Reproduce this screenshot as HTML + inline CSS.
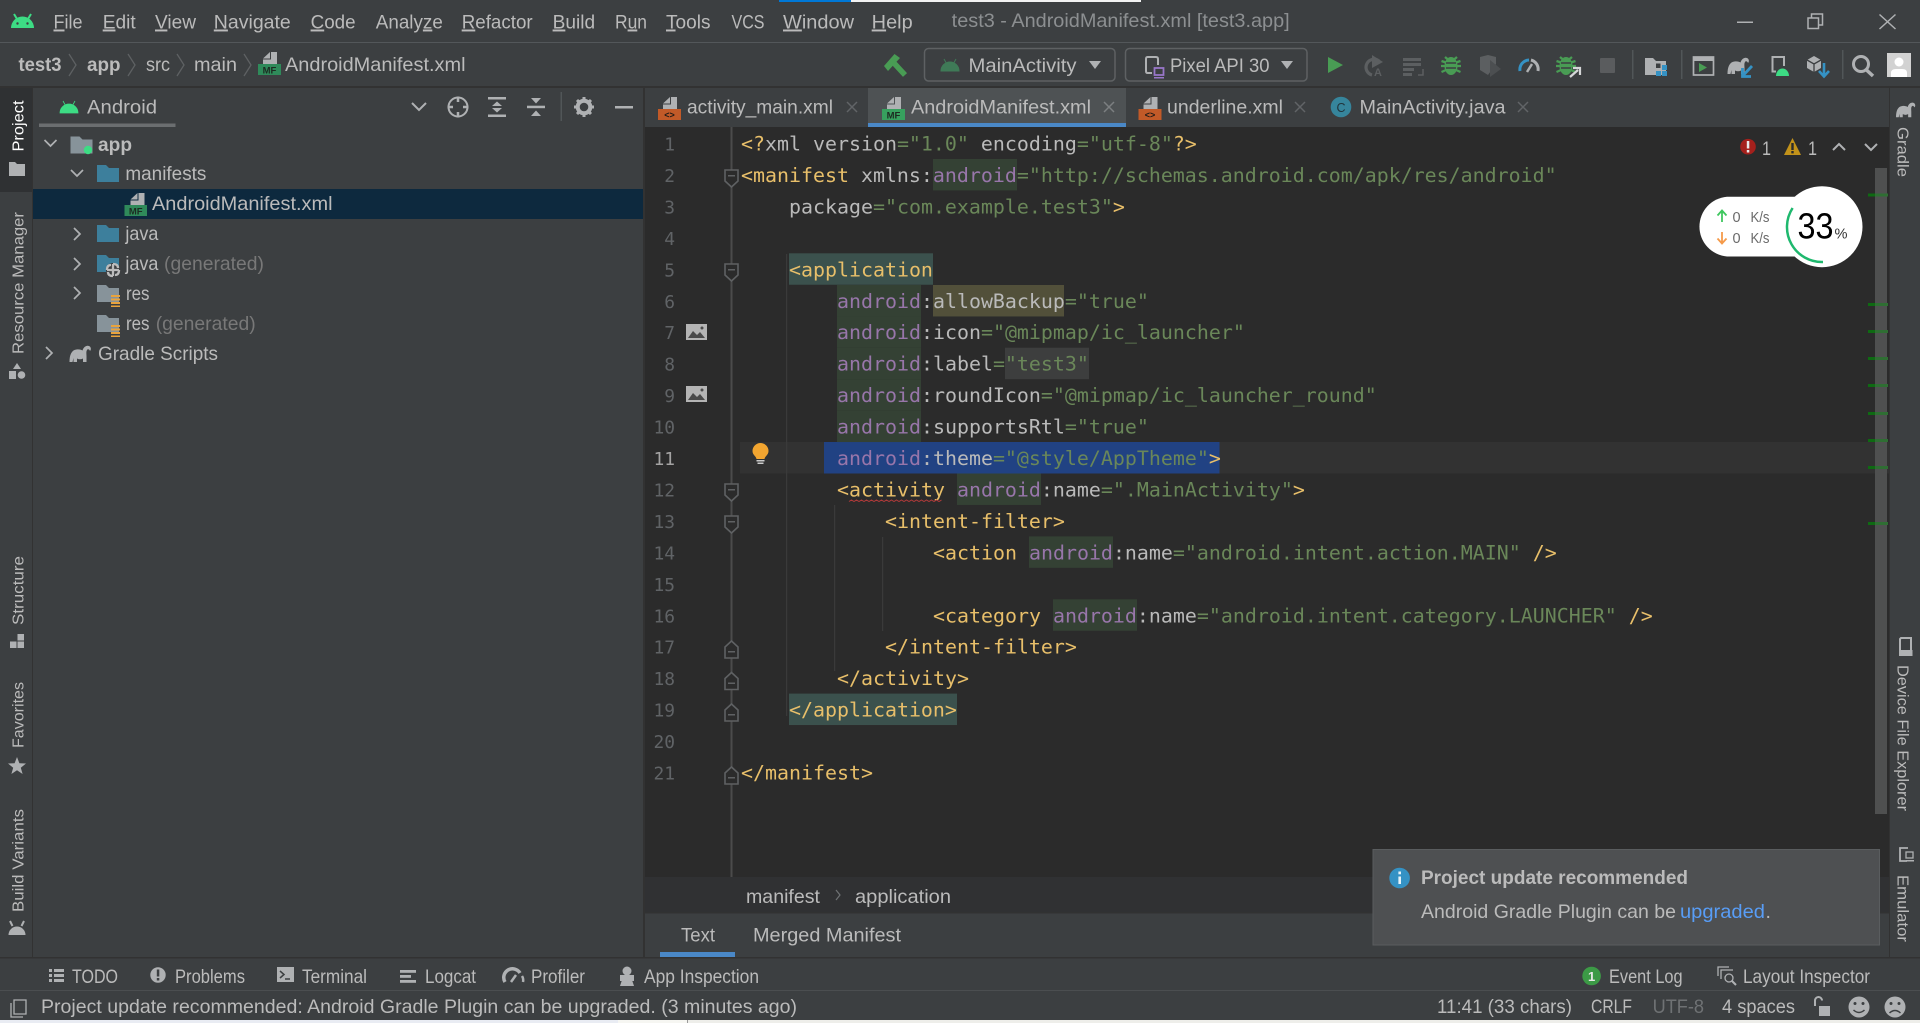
<!DOCTYPE html>
<html><head><meta charset="utf-8"><title>test3 - AndroidManifest.xml</title>
<style>
html,body{margin:0;padding:0;background:#3c3f41;overflow:hidden}
svg{display:block}
text{white-space:pre}
.u{font:19.5px "Liberation Sans",sans-serif;fill:#bbb}
.b{font:bold 19.5px "Liberation Sans",sans-serif;fill:#bbb}
.v{font:16px "Liberation Sans",sans-serif;fill:#bbb}
.c{font:19.93px "DejaVu Sans Mono","Liberation Mono",monospace;fill:#bababa}
.l{font:17.9px "DejaVu Sans Mono","Liberation Mono",monospace;fill:#606366;text-anchor:end}
.t{fill:#e8bf6a}.n{fill:#9876aa}.s{fill:#6a8759}
.g{fill:#787878}
.ic{fill:#afb1b3}
.d{fill:#5c5f61}
.gr{fill:#499c54}
</style></head><body>
<svg xmlns="http://www.w3.org/2000/svg" width="1920" height="1023" viewBox="0 0 1920 1023">
<defs>
<path id="eleph" d="M0 17C0 10 2 5 7 4.500C10 4 12 5 13 5.500C14 2 17 0 19.500 1C21.500 1.800 22 4.500 20.500 6C20 4.500 18.500 3.500 17.500 5C16.500 6.500 17 9 17 11V17H13.500V13.500C11.500 14.500 9.500 14.500 7.500 13.500V17H4V13L3 17Z"/>
<path id="droid" d="M0 13A9 9 0 0 1 18 13ZM3 1L5.500 5.500M15 1L12.500 5.500"/>
<path id="fold" d="M0 2H9L12 5H22V19H0Z"/>
<g id="doc"><path d="M12 0H18V12H4V7.500H12Z"/><path d="M4 6.500L11 0V6.500Z"/></g>
<g id="bug"><ellipse cx="0" cy="1" rx="6.500" ry="9" fill="#499c54"/><path d="M-6 -8L-3 -5.500M6 -8L3 -5.500M-10 1H-5M5 1H10M-9.500 -4L-5 -2.500M9.500 -4L5 -2.500M-9.500 7L-5 5M9.500 7L5 5" stroke="#499c54" stroke-width="2.300" fill="none"/><path d="M-5 -2H5M-5 3H5" stroke="#3c3f41" stroke-width="1.500"/></g>
</defs>

<!-- base -->
<rect width="1920" height="1023" fill="#3c3f41"/>
<rect x="779" y="0" width="72" height="2" fill="#0078d7"/><rect x="851" y="0" width="290" height="2" fill="#f2f2f2"/>
<rect y="42" width="1920" height="1" fill="#53575a"/>
<rect y="86" width="1920" height="2" fill="#323232"/>

<!-- title / menu -->
<g fill="#3ddc84"><path d="M11 28A11.500 11.500 0 0 1 34 28Z"/><path d="M14 14L17 19M31 14L28 19" stroke="#3ddc84" stroke-width="2"/></g>
<circle cx="17.500" cy="23.500" r="1.200" fill="#3c3f41"/><circle cx="27.500" cy="23.500" r="1.200" fill="#3c3f41"/>
<text class="u" x="53.500" y="28.500" textLength="29" lengthAdjust="spacingAndGlyphs"><tspan text-decoration="underline">F</tspan>ile</text>
<text class="u" x="102.700" y="28.500" textLength="33" lengthAdjust="spacingAndGlyphs"><tspan text-decoration="underline">E</tspan>dit</text>
<text class="u" x="155" y="28.500" textLength="41" lengthAdjust="spacingAndGlyphs"><tspan text-decoration="underline">V</tspan>iew</text>
<text class="u" x="213.800" y="28.500" textLength="77" lengthAdjust="spacingAndGlyphs"><tspan text-decoration="underline">N</tspan>avigate</text>
<text class="u" x="310.600" y="28.500" textLength="45" lengthAdjust="spacingAndGlyphs"><tspan text-decoration="underline">C</tspan>ode</text>
<text class="u" x="375.800" y="28.500" textLength="67" lengthAdjust="spacingAndGlyphs">Analy<tspan text-decoration="underline">z</tspan>e</text>
<text class="u" x="461.700" y="28.500" textLength="71" lengthAdjust="spacingAndGlyphs"><tspan text-decoration="underline">R</tspan>efactor</text>
<text class="u" x="552.600" y="28.500" textLength="42.500" lengthAdjust="spacingAndGlyphs"><tspan text-decoration="underline">B</tspan>uild</text>
<text class="u" x="615" y="28.500" textLength="32" lengthAdjust="spacingAndGlyphs">R<tspan text-decoration="underline">u</tspan>n</text>
<text class="u" x="666" y="28.500" textLength="44.500" lengthAdjust="spacingAndGlyphs"><tspan text-decoration="underline">T</tspan>ools</text>
<text class="u" x="731.500" y="28.500" textLength="33" lengthAdjust="spacingAndGlyphs">VCS</text>
<text class="u" x="783" y="28.500" textLength="71" lengthAdjust="spacingAndGlyphs"><tspan text-decoration="underline">W</tspan>indow</text>
<text class="u" x="871.700" y="28.500" textLength="41" lengthAdjust="spacingAndGlyphs"><tspan text-decoration="underline">H</tspan>elp</text>
<text class="u" style="fill:#8c8f91" x="951.700" y="27" textLength="338" lengthAdjust="spacingAndGlyphs">test3 - AndroidManifest.xml [test3.app]</text>
<rect x="1737" y="21.500" width="16" height="1.500" fill="#afb1b3"/>
<g fill="none" stroke="#afb1b3" stroke-width="1.500"><rect x="1808" y="18" width="10.500" height="10.500"/><path d="M1811.500 18V14H1822.500V25H1818.500"/><path d="M1879.500 14.500L1895.500 29M1895.500 14.500L1879.500 29"/></g>

<!-- nav bar -->
<text class="b" x="18.500" y="71" textLength="43" lengthAdjust="spacingAndGlyphs">test3</text>
<text class="b" x="87" y="71" textLength="33.500" lengthAdjust="spacingAndGlyphs">app</text>
<text class="u" x="146" y="71" textLength="24" lengthAdjust="spacingAndGlyphs">src</text>
<text class="u" x="194" y="71" textLength="43" lengthAdjust="spacingAndGlyphs">main</text>
<g fill="none" stroke="#5e6163" stroke-width="1.300"><path d="M69 54L76 65L69 76M128 54L135 65L128 76M177 54L184 65L177 76M244 54L251 65L244 76"/></g>
<g transform="translate(258,52)"><use href="#doc" class="ic" transform="translate(1,0)"/><rect y="12" width="23" height="11" fill="#2f8a5a"/><text x="11.500" y="21.500" text-anchor="middle" style="font:bold 9.500px 'Liberation Sans',sans-serif;fill:#1d2b22">MF</text></g>
<text class="u" x="285" y="71" textLength="180.500" lengthAdjust="spacingAndGlyphs">AndroidManifest.xml</text>

<!-- toolbar -->
<path d="M893 62L905 75" stroke="#499c54" stroke-width="5.500"/><path d="M884 66L894.500 54L900 58L888 71Z" fill="#499c54"/>
<rect x="924.500" y="48.500" width="190.500" height="32.500" rx="4" fill="none" stroke="#5e6163" stroke-width="1.500"/>
<rect x="1125.500" y="48.500" width="181.500" height="32.500" rx="4" fill="none" stroke="#5e6163" stroke-width="1.500"/>
<g transform="translate(941,58)"><use href="#droid" fill="#3f7a57" stroke="#3f7a57" stroke-width="1"/></g>
<text class="u" x="968.500" y="72" textLength="108" lengthAdjust="spacingAndGlyphs">MainActivity</text>
<path d="M1089 61H1101L1095 69Z" class="ic"/>
<g fill="none" stroke="#afb1b3" stroke-width="2"><path d="M1152 73H1147.500Q1146 73 1146 71V59Q1146 57 1147.500 57H1156Q1158 57 1158 59V65"/></g><rect x="1154.500" y="68" width="9" height="7" fill="none" stroke="#9876c8" stroke-width="1.800"/><rect x="1154" y="77" width="10" height="1.500" fill="#9876c8"/>
<text class="u" x="1170" y="72" textLength="99.500" lengthAdjust="spacingAndGlyphs">Pixel API 30</text>
<path d="M1281 61H1293L1287 69Z" class="ic"/>

<polygon points="1328,57 1343,65 1328,73" fill="#499c54"/>
<g fill="none" stroke="#5c5f61" stroke-width="3.200"><path d="M1379 61A8 8 0 1 0 1372 75"/></g><path d="M1372 55L1383 62L1372 68Z" class="d"/><text x="1374" y="76" style="font:bold 11px 'Liberation Sans',sans-serif;fill:#5c5f61">A</text>
<g class="d"><rect x="1403" y="58" width="18" height="3"/><rect x="1403" y="63" width="18" height="3"/><rect x="1403" y="68" width="11" height="3"/><rect x="1403" y="73" width="9" height="3"/></g><path d="M1418 75H1423V69" fill="none" stroke="#5c5f61" stroke-width="1.500"/>
<use href="#bug" transform="translate(1451,65)"/>
<path d="M1480 57L1488 55L1496 57V64L1488 75L1480 70Z" class="d"/><path d="M1490 60L1501 69L1490 77Z" fill="#4c4f51"/>
<path d="M1520 71A9.500 9.500 0 0 1 1529 60" fill="none" stroke="#3592c4" stroke-width="3"/><path d="M1531 60A9.500 9.500 0 0 1 1538 71" fill="none" stroke="#afb1b3" stroke-width="3"/><path d="M1527 72L1532 64" stroke="#afb1b3" stroke-width="2.500"/>
<use href="#bug" transform="translate(1566,65)"/><path d="M1570 77L1578 70M1573 68H1580V75" fill="none" stroke="#d5d7d8" stroke-width="2.200"/>
<rect x="1600" y="58" width="15" height="15" rx="1" fill="#5a5c5e"/>
<rect x="1632" y="50" width="1.500" height="29" fill="#515658"/>
<path d="M1645 58H1653L1656 61H1666V75H1645Z" class="ic"/><g fill="#3592c4"><rect x="1656" y="63.500" width="4.500" height="4.500" fill="#3c3f41"/><rect x="1662" y="65" width="5" height="5"/><rect x="1656" y="71" width="5" height="5"/><rect x="1662" y="71" width="5" height="5"/></g>
<rect x="1681" y="50" width="1.500" height="29" fill="#515658"/>
<rect x="1693.500" y="57" width="20" height="18" fill="none" stroke="#afb1b3" stroke-width="1.700"/><rect x="1693" y="57" width="21" height="4" fill="#afb1b3"/><polygon points="1699,63 1707,67.500 1699,72" fill="#499c54"/>
<use href="#eleph" class="ic" transform="translate(1727.500,57) scale(1,1)"/><path d="M1752 66L1743.500 75M1751 76.500H1742.500V68" fill="none" stroke="#3592c4" stroke-width="2.800"/>
<path d="M1776 71.500H1772.500V57H1784V66" fill="none" stroke="#afb1b3" stroke-width="2"/><path d="M1776 76A6.500 7.500 0 0 1 1789 76Z" fill="#3ddc84"/>
<path d="M1807 60L1814 56L1821 60V68L1814 72L1807 68Z" class="ic"/><path d="M1814 63V72M1807 60L1814 64L1821 60" stroke="#3c3f41" stroke-width="1.300" fill="none"/><path d="M1824 63V76M1819 71L1824 76.500L1829 71" stroke="#3592c4" stroke-width="2.600" fill="none"/>
<rect x="1842" y="50" width="1.500" height="29" fill="#515658"/>
<circle cx="1861" cy="64" r="7.500" fill="none" stroke="#afb1b3" stroke-width="3"/><path d="M1866.500 70L1873 76" stroke="#afb1b3" stroke-width="3.500"/>
<rect x="1887" y="53" width="24" height="24" fill="#d2d2d2"/><circle cx="1899" cy="62" r="4.500" fill="#fff"/><path d="M1891 77V73Q1891 69 1896 69H1902Q1907 69 1907 73V77Z" fill="#fff"/>

<!-- left stripe -->
<rect x="0" y="88" width="32" height="104" fill="#2f3133"/>
<rect x="32" y="88" width="1" height="870" fill="#323232"/>
<text class="v" style="fill:#fff" transform="translate(23.500,151.500) rotate(-90)" textLength="51" lengthAdjust="spacingAndGlyphs">Project</text>
<path d="M9 162H15L17 164H25V176H9Z" class="ic"/>
<text class="v" transform="translate(23.500,354) rotate(-90)" textLength="142" lengthAdjust="spacingAndGlyphs">Resource Manager</text>
<path d="M17 363L21 369H13Z M9 371H16V379H9Z" class="ic"/><circle cx="21.500" cy="375" r="3.800" class="ic"/>
<text class="v" transform="translate(23.500,625) rotate(-90)" textLength="69" lengthAdjust="spacingAndGlyphs">Structure</text>
<g class="ic"><rect x="17.500" y="634" width="6.500" height="6.500"/><rect x="10" y="641.500" width="6.500" height="6.500"/><rect x="17.500" y="641.500" width="6.500" height="6.500"/></g>
<text class="v" transform="translate(23.500,748) rotate(-90)" textLength="66" lengthAdjust="spacingAndGlyphs">Favorites</text>
<path d="M17 757L19.400 763.300L26 763.500L20.800 767.700L22.600 774L17 770.300L11.400 774L13.200 767.700L8 763.500L14.600 763.300Z" class="ic"/>
<text class="v" transform="translate(23.500,912) rotate(-90)" textLength="103" lengthAdjust="spacingAndGlyphs">Build Variants</text>
<path d="M8.500 935A8.500 8.500 0 0 1 25.500 935Z" class="ic"/><path d="M10 921L12.500 926M24 921L21.500 926" stroke="#afb1b3" stroke-width="2"/>

<!-- project panel -->
<rect x="643" y="88" width="2" height="870" fill="#323232"/>
<g transform="translate(60,100)"><use href="#droid" fill="#3ddc84" stroke="#3ddc84" stroke-width=".8"/></g>
<text class="u" x="87" y="113.500" textLength="70" lengthAdjust="spacingAndGlyphs">Android</text>
<rect x="39" y="123.500" width="136.500" height="3.500" fill="#6b6e70"/>
<path d="M412 103L419 110L426 103" fill="none" stroke="#afb1b3" stroke-width="2"/>
<circle cx="458" cy="107" r="9.500" fill="none" stroke="#afb1b3" stroke-width="2"/><path d="M458 96.500V102M458 112V117.500M447.500 107H453M463 107H468.500" stroke="#afb1b3" stroke-width="2.500"/>
<g class="ic"><rect x="488" y="97" width="18" height="2.500"/><rect x="488" y="114.500" width="18" height="2.500"/><path d="M497 101.500L502 106H492Z M497 112.500L492 108H502Z"/></g>
<g class="ic"><rect x="527" y="105.700" width="18" height="2.500"/><path d="M531 98H541L536 103.500Z M531 116H541L536 110.500Z"/></g>
<rect x="560.500" y="92" width="1.500" height="29" fill="#515658"/>
<g><circle cx="584" cy="107" r="6.300" fill="none" stroke="#afb1b3" stroke-width="4"/><path d="M584 97V117M574 107H594M577 100L591 114M591 100L577 114" stroke="#afb1b3" stroke-width="3" stroke-dasharray="3.500 13"/></g>
<rect x="615" y="106" width="18" height="2.500" fill="#afb1b3"/>

<!-- tree -->
<rect x="33" y="189" width="610" height="30" fill="#0d293e"/>
<g fill="none" stroke="#afb1b3" stroke-width="1.700"><path d="M44.500 140L50.500 146L56.500 140M71 170L77 176L83 170M74 228L80 234L74 240M74 258L80 264L74 270M74 287L80 293L74 299M46 347L52 353L46 359"/></g>
<use href="#fold" fill="#87939a" transform="translate(70.500,134.500)"/><circle cx="88" cy="150" r="4.200" fill="#3ddc84"/>
<text class="b" x="98" y="151" textLength="34" lengthAdjust="spacingAndGlyphs">app</text>
<use href="#fold" fill="#3d7f9c" transform="translate(97,163)"/>
<text class="u" x="125.400" y="180" textLength="81" lengthAdjust="spacingAndGlyphs">manifests</text>
<g transform="translate(124.500,193)"><use href="#doc" class="ic" transform="translate(2,0)"/><rect y="12" width="22.500" height="11" fill="#2f8a5a"/><text x="11.200" y="21.500" text-anchor="middle" style="font:bold 9.500px 'Liberation Sans',sans-serif;fill:#1d2b22">MF</text></g>
<text class="u" x="152" y="210" textLength="180.500" lengthAdjust="spacingAndGlyphs">AndroidManifest.xml</text>
<use href="#fold" fill="#3d7f9c" transform="translate(97,223)"/>
<text class="u" x="125.400" y="240" textLength="33" lengthAdjust="spacingAndGlyphs">java</text>
<use href="#fold" fill="#3d7f9c" transform="translate(97,253)"/>
<circle cx="113" cy="270" r="7" fill="#3c3f41"/><g stroke="#bbb" stroke-width="2.300" fill="none"><path d="M113 264Q118 264 118 268M119 270Q119 275 115 275M113 276Q108 276 108 272M107 270Q107 265 111 265M113 270L113 264M113 270L119 270M113 270L113 276M113 270L107 270"/></g>
<text class="u" x="125.400" y="270" textLength="33" lengthAdjust="spacingAndGlyphs">java</text><text class="u g" x="164" y="270" textLength="100" lengthAdjust="spacingAndGlyphs">(generated)</text>
<use href="#fold" fill="#87939a" transform="translate(97,283)"/>
<g fill="#e8a33d"><rect x="111" y="295" width="9" height="2"/><rect x="111" y="298.500" width="9" height="2"/><rect x="111" y="302" width="9" height="2"/><rect x="111" y="305.500" width="9" height="1.500"/></g>
<text class="u" x="126" y="300" textLength="23.500" lengthAdjust="spacingAndGlyphs">res</text>
<use href="#fold" fill="#87939a" transform="translate(97,313)"/>
<g fill="#e8a33d"><rect x="111" y="325" width="9" height="2"/><rect x="111" y="328.500" width="9" height="2"/><rect x="111" y="332" width="9" height="2"/><rect x="111" y="335.500" width="9" height="1.500"/></g>
<text class="u" x="126" y="330" textLength="23.500" lengthAdjust="spacingAndGlyphs">res</text><text class="u g" x="155.700" y="330" textLength="100" lengthAdjust="spacingAndGlyphs">(generated)</text>
<use href="#eleph" class="ic" transform="translate(69.500,345)"/>
<text class="u" x="98" y="360" textLength="120" lengthAdjust="spacingAndGlyphs">Gradle Scripts</text>

<!-- tab bar -->
<rect x="868" y="88" width="258" height="39" fill="#4e5254"/>
<rect x="868" y="123" width="258" height="4" fill="#4a88c7"/>
<g transform="translate(658,97)"><use href="#doc" class="ic" transform="translate(1,0)"/><rect y="12" width="23" height="11" fill="#c25a28"/><text x="11.500" y="21" text-anchor="middle" style="font:bold 9px 'Liberation Sans',sans-serif;fill:#1f1a17">&lt;&gt;</text></g>
<text class="u" x="687" y="113.500" textLength="146" lengthAdjust="spacingAndGlyphs">activity_main.xml</text>
<g transform="translate(882,97)"><use href="#doc" class="ic" transform="translate(1,0)"/><rect y="12" width="23" height="11" fill="#37a05e"/><text x="11.500" y="21.500" text-anchor="middle" style="font:bold 9.500px 'Liberation Sans',sans-serif;fill:#1d2b22">MF</text></g>
<text class="u" x="911" y="113.500" textLength="180" lengthAdjust="spacingAndGlyphs">AndroidManifest.xml</text>
<g transform="translate(1138.500,97)"><use href="#doc" class="ic" transform="translate(1,0)"/><rect y="12" width="23" height="11" fill="#c25a28"/><text x="11.500" y="21" text-anchor="middle" style="font:bold 9px 'Liberation Sans',sans-serif;fill:#1f1a17">&lt;&gt;</text></g>
<text class="u" x="1167" y="113.500" textLength="116" lengthAdjust="spacingAndGlyphs">underline.xml</text>
<circle cx="1341" cy="107" r="10.300" fill="#3592ad" opacity=".85"/><text x="1341" y="112" text-anchor="middle" style="font:12.500px 'Liberation Sans',sans-serif;fill:#21353d">C</text>
<text class="u" x="1359.500" y="113.500" textLength="146" lengthAdjust="spacingAndGlyphs">MainActivity.java</text>
<g fill="none" stroke="#616467" stroke-width="1.500"><path d="M847 102L857 112M857 102L847 112M1295 102L1305 112M1305 102L1295 112M1518 102L1528 112M1528 102L1518 112"/><path d="M1104 102L1114 112M1114 102L1104 112" stroke="#7c7f81"/></g>

<!-- editor -->
<rect x="645" y="127" width="1244" height="750" fill="#2b2b2b"/>
<rect x="645" y="877" width="1244" height="36" fill="#303133"/>
<rect x="740" y="442" width="1149" height="31.500" fill="#323232"/>
<rect x="824" y="442" width="395.500" height="31.500" fill="#214283"/>

<!-- indent guides & fold line -->
<rect x="730.500" y="127" width="2" height="750" fill="#4b4b4b"/>
<g fill="#3a3a3a"><rect x="786" y="254" width="1.200" height="462"/><rect x="834" y="505" width="1.200" height="166"/><rect x="882" y="537" width="1.200" height="94"/></g>

<!-- highlights -->
<g fill="#344134">
<rect x="933" y="159" width="84" height="31.450"/>
<rect x="837" y="285" width="84" height="31.450"/>
<rect x="837" y="316.300" width="84" height="31.450"/>
<rect x="837" y="347.700" width="84" height="31.450"/>
<rect x="837" y="379.100" width="84" height="31.450"/>
<rect x="837" y="410.600" width="84" height="31.450"/>
<rect x="957" y="473.500" width="84" height="31.450"/>
<rect x="1029" y="536.400" width="84" height="31.450"/>
<rect x="1053" y="599.300" width="84" height="31.450"/>
</g>
<g fill="#3b514d"><rect x="789" y="253.300" width="144" height="31.450"/><rect x="789" y="693.600" width="168" height="31.450"/></g>
<rect x="933" y="285" width="131" height="31.450" fill="#52503a"/>
<rect x="1005" y="347.700" width="84" height="31.450" fill="#3d3e3e"/>

<!-- line numbers -->
<g transform="translate(0,1)">
<text class="l" x="675" y="149.500">1</text><text class="l" x="675" y="181">2</text><text class="l" x="675" y="212.400">3</text><text class="l" x="675" y="243.900">4</text><text class="l" x="675" y="275.300">5</text><text class="l" x="675" y="306.800">6</text><text class="l" x="675" y="338.200">7</text><text class="l" x="675" y="369.700">8</text><text class="l" x="675" y="401.100">9</text><text class="l" x="675" y="432.600">10</text><text class="l" style="fill:#a4a3a3" x="675" y="464">11</text><text class="l" x="675" y="495.500">12</text><text class="l" x="675" y="526.900">13</text><text class="l" x="675" y="558.400">14</text><text class="l" x="675" y="589.800">15</text><text class="l" x="675" y="621.300">16</text><text class="l" x="675" y="652.700">17</text><text class="l" x="675" y="684.200">18</text><text class="l" x="675" y="715.600">19</text><text class="l" x="675" y="747.100">20</text><text class="l" x="675" y="778.500">21</text>
</g>

<!-- fold markers -->
<g fill="#2b2b2b" stroke="#5f6163" stroke-width="1.600">
<path d="M725 170H738V181L731.500 187L725 181Z"/><path d="M725 264H738V275L731.500 281L725 275Z"/><path d="M725 484H738V495L731.500 501L725 495Z"/><path d="M725 516H738V527L731.500 533L725 527Z"/>
<path d="M725 658H738V647L731.500 641L725 647Z"/><path d="M725 689.500H738V678.500L731.500 672.500L725 678.500Z"/><path d="M725 721H738V710L731.500 704L725 710Z"/><path d="M725 784H738V773L731.500 767L725 773Z"/>
</g>
<g fill="#5f6163"><rect x="728" y="175" width="7" height="1.500"/><rect x="728" y="269" width="7" height="1.500"/><rect x="728" y="489" width="7" height="1.500"/><rect x="728" y="521" width="7" height="1.500"/><rect x="728" y="651" width="7" height="1.500"/><rect x="728" y="682.500" width="7" height="1.500"/><rect x="728" y="714" width="7" height="1.500"/><rect x="728" y="777" width="7" height="1.500"/></g>

<!-- gutter icons -->
<g><rect x="686" y="324" width="21" height="16" fill="#b4b4b4"/><path d="M688 338L693 331L697 335L700 332L705 338Z" fill="#4a4a4a"/><circle cx="702" cy="328" r="1.500" fill="#4a4a4a"/></g>
<g><rect x="686" y="386" width="21" height="16" fill="#b4b4b4"/><path d="M688 400L693 393L697 397L700 394L705 400Z" fill="#4a4a4a"/><circle cx="702" cy="390" r="1.500" fill="#4a4a4a"/></g>
<path d="M760.500 443A8 8 0 0 1 768.500 451C768.500 455 765 456 764.500 459H756.500C756 456 752.500 455 752.500 451A8 8 0 0 1 760.500 443Z" fill="#f2a530"/><rect x="756.500" y="460" width="8" height="1.500" fill="#ccc"/><rect x="757.500" y="462.500" width="6" height="1.500" fill="#ccc"/>

<!-- code -->
<g transform="translate(0,1)">
<text class="c" x="741" y="149.500"><tspan class="t">&lt;?</tspan>xml version<tspan class="s">="1.0"</tspan> encoding<tspan class="s">="utf-8"</tspan><tspan class="t">?&gt;</tspan></text>
<text class="c" x="741" y="181"><tspan class="t">&lt;manifest</tspan> xmlns:<tspan class="n">android</tspan><tspan class="s">="http://schemas.android.com/apk/res/android"</tspan></text>
<text class="c" x="789" y="212.400">package<tspan class="s">="com.example.test3"</tspan><tspan class="t">&gt;</tspan></text>
<text class="c t" x="789" y="275.300">&lt;application</text>
<text class="c" x="837" y="306.800"><tspan class="n">android</tspan>:allowBackup<tspan class="s">="true"</tspan></text>
<text class="c" x="837" y="338.200"><tspan class="n">android</tspan>:icon<tspan class="s">="@mipmap/ic_launcher"</tspan></text>
<text class="c" x="837" y="369.700"><tspan class="n">android</tspan>:label<tspan class="s">="test3"</tspan></text>
<text class="c" x="837" y="401.100"><tspan class="n">android</tspan>:roundIcon<tspan class="s">="@mipmap/ic_launcher_round"</tspan></text>
<text class="c" x="837" y="432.600"><tspan class="n">android</tspan>:supportsRtl<tspan class="s">="true"</tspan></text>
<text class="c" x="837" y="464"><tspan class="n">android</tspan>:theme<tspan class="s">="@style/AppTheme"</tspan><tspan class="t">&gt;</tspan></text>
<text class="c" x="837" y="495.500"><tspan class="t">&lt;activity</tspan> <tspan class="n">android</tspan>:name<tspan class="s">=".MainActivity"</tspan><tspan class="t">&gt;</tspan></text>
<text class="c t" x="885" y="526.900">&lt;intent-filter&gt;</text>
<text class="c" x="933" y="558.400"><tspan class="t">&lt;action</tspan> <tspan class="n">android</tspan>:name<tspan class="s">="android.intent.action.MAIN"</tspan> <tspan class="t">/&gt;</tspan></text>
<text class="c" x="933" y="621.300"><tspan class="t">&lt;category</tspan> <tspan class="n">android</tspan>:name<tspan class="s">="android.intent.category.LAUNCHER"</tspan> <tspan class="t">/&gt;</tspan></text>
<text class="c t" x="885" y="652.700">&lt;/intent-filter&gt;</text>
<text class="c t" x="837" y="684.200">&lt;/activity&gt;</text>
<text class="c t" x="789" y="715.600">&lt;/application&gt;</text>
<text class="c t" x="741" y="778.500">&lt;/manifest&gt;</text>
</g>
<path d="M849 501.500l2.500 -1.500 2.500 1.500 2.500 -1.500 2.500 1.500 2.500 -1.500 2.500 1.500 2.500 -1.500 2.500 1.500 2.500 -1.500 2.500 1.500 2.500 -1.500 2.500 1.500 2.500 -1.500 2.500 1.500 2.500 -1.500 2.500 1.500 2.500 -1.500 2.500 1.500 2.500 -1.500 2.500 1.500 2.500 -1.500 2.500 1.500 2.500 -1.500 2.500 1.500 2.500 -1.500 2.500 1.500 2.500 -1.500 2.500 1.500 2.500 -1.500 2.500 1.500 2.500 -1.500 2.500 1.500 2.500 -1.500 2.500 1.500 2.500 -1.500 2.500 1.500 2.500 -1.500" fill="none" stroke="#b03a3a" stroke-width="1"/>

<!-- scrollbar & marks -->
<rect x="1875" y="168" width="12" height="646" fill="#4f5050"/>
<g><rect x="1868" y="193.500" width="7" height="3" fill="#0e6a12"/><rect x="1875" y="193.500" width="13" height="3" fill="#2f6e33"/>
<rect x="1868" y="303" width="7" height="3" fill="#0e6a12"/><rect x="1875" y="303" width="13" height="3" fill="#2f6e33"/>
<rect x="1868" y="330" width="7" height="3" fill="#0e6a12"/><rect x="1875" y="330" width="13" height="3" fill="#2f6e33"/>
<rect x="1868" y="357" width="7" height="3" fill="#0e6a12"/><rect x="1875" y="357" width="13" height="3" fill="#2f6e33"/>
<rect x="1868" y="384" width="7" height="3" fill="#0e6a12"/><rect x="1875" y="384" width="13" height="3" fill="#2f6e33"/>
<rect x="1868" y="412" width="7" height="3" fill="#0e6a12"/><rect x="1875" y="412" width="13" height="3" fill="#2f6e33"/>
<rect x="1868" y="439" width="7" height="3" fill="#0e6a12"/><rect x="1875" y="439" width="13" height="3" fill="#2f6e33"/>
<rect x="1868" y="466" width="7" height="3" fill="#0e6a12"/><rect x="1875" y="466" width="13" height="3" fill="#2f6e33"/>
<rect x="1868" y="522" width="7" height="3" fill="#0e6a12"/><rect x="1875" y="522" width="13" height="3" fill="#2f6e33"/></g>

<!-- inspections -->
<circle cx="1748" cy="146.700" r="7.800" fill="#a4201c"/><rect x="1746.800" y="141" width="2.500" height="7.500" fill="#e8e8e8"/><rect x="1746.800" y="150" width="2.500" height="2.500" fill="#e8e8e8"/>
<text x="1762" y="155" textLength="9" lengthAdjust="spacingAndGlyphs" style="font:19px 'Liberation Sans',sans-serif;fill:#bbb">1</text>
<path d="M1792.500 138L1801 155H1784Z" fill="#c2921a"/><rect x="1791.300" y="143" width="2.400" height="7" fill="#2b2b2b"/><rect x="1791.300" y="151" width="2.400" height="2.400" fill="#2b2b2b"/>
<text x="1808" y="155" textLength="9" lengthAdjust="spacingAndGlyphs" style="font:19px 'Liberation Sans',sans-serif;fill:#bbb">1</text>
<path d="M1833 150L1839 144L1845 150M1865 144L1871 150L1877 144" fill="none" stroke="#afb1b3" stroke-width="2"/>

<!-- net widget -->
<path d="M1727 196.700H1800V256.500H1727A30 30 0 0 1 1727 196.700Z" fill="#fff"/>
<circle cx="1822" cy="226.700" r="40.500" fill="#fff"/>
<path d="M1792.600 208A35 35 0 0 0 1823 262" fill="none" stroke="#1fb86e" stroke-width="2.500"/>
<path d="M1722 222V211M1717.500 215.500L1722 210.500L1726.500 215.500" fill="none" stroke="#3fc75f" stroke-width="1.800"/>
<path d="M1722 232V243M1717.500 238.500L1722 243.500L1726.500 238.500" fill="none" stroke="#f59a4a" stroke-width="1.800"/>
<g style="font:14.500px 'Liberation Sans',sans-serif;fill:#6a6a6a"><text x="1732.500" y="222">0</text><text x="1750.500" y="222" textLength="19" lengthAdjust="spacingAndGlyphs">K/s</text><text x="1732.500" y="243">0</text><text x="1750.500" y="243" textLength="19" lengthAdjust="spacingAndGlyphs">K/s</text></g>
<text x="1797.500" y="238.500" textLength="36" lengthAdjust="spacingAndGlyphs" style="font:36px 'Liberation Sans',sans-serif;fill:#000">33</text>
<text x="1834.500" y="238.500" textLength="13" lengthAdjust="spacingAndGlyphs" style="font:15px 'Liberation Sans',sans-serif;fill:#333">%</text>

<!-- editor bottom -->
<text class="u" x="746" y="903" textLength="74" lengthAdjust="spacingAndGlyphs">manifest</text>
<path d="M836 890L840 895L836 900" fill="none" stroke="#6f7274" stroke-width="1.200"/>
<text class="u" x="855" y="903" textLength="96" lengthAdjust="spacingAndGlyphs">application</text>
<rect x="645" y="913" width="1244" height="44" fill="#3c3f41"/>
<rect x="645" y="912.500" width="1244" height="1" fill="#323232"/>
<text class="u" x="681" y="941.500" textLength="34" lengthAdjust="spacingAndGlyphs">Text</text>
<rect x="660" y="952" width="75" height="5" fill="#4a88c7"/>
<text class="u" x="753" y="941.500" textLength="148" lengthAdjust="spacingAndGlyphs">Merged Manifest</text>

<!-- notification -->
<rect x="1373" y="849.500" width="506.500" height="95.500" fill="#4e5052" stroke="#5a5d5f" stroke-width="1"/>
<circle cx="1399.600" cy="878" r="10.300" fill="#3592c4"/><rect x="1398.400" y="876.500" width="2.600" height="7.500" fill="#e6f2f9"/><rect x="1398.400" y="871.500" width="2.600" height="2.800" fill="#e6f2f9"/>
<text class="b" x="1421" y="884" textLength="267" lengthAdjust="spacingAndGlyphs">Project update recommended</text>
<text class="u" x="1421" y="918" textLength="255" lengthAdjust="spacingAndGlyphs">Android Gradle Plugin can be</text>
<text class="u" style="fill:#589df6" x="1680" y="918" textLength="85" lengthAdjust="spacingAndGlyphs">upgraded</text>
<text class="u" x="1765.500" y="918">.</text>

<!-- right stripe -->
<rect x="1889" y="88" width="1" height="870" fill="#323232"/>
<use href="#eleph" class="ic" transform="translate(1896,102) scale(.9)"/>
<text class="v" transform="translate(1897.500,127) rotate(90)" textLength="50" lengthAdjust="spacingAndGlyphs">Gradle</text>
<path d="M1901 638H1911V655H1900V639Z" fill="none" stroke="#afb1b3" stroke-width="2"/><rect x="1899" y="650" width="13.500" height="6" fill="#afb1b3"/>
<text class="v" transform="translate(1897.500,665) rotate(90)" textLength="146" lengthAdjust="spacingAndGlyphs">Device File Explorer</text>
<path d="M1908 848H1900V861H1907" fill="none" stroke="#afb1b3" stroke-width="1.800"/><rect x="1906" y="852" width="7" height="6" fill="none" stroke="#afb1b3" stroke-width="1.300"/><rect x="1906" y="860" width="8" height="1.500" fill="#afb1b3"/>
<text class="v" transform="translate(1897.500,875) rotate(90)" textLength="67" lengthAdjust="spacingAndGlyphs">Emulator</text>

<!-- bottom tool bar -->
<rect y="957" width="1920" height="1.500" fill="#323232"/>
<rect y="990" width="1920" height="1" fill="#4b4e50"/>
<g class="ic"><rect x="49" y="969" width="3" height="3"/><rect x="54" y="969" width="10" height="3"/><rect x="49" y="974" width="3" height="3"/><rect x="54" y="974" width="10" height="3"/><rect x="49" y="979" width="3" height="3"/><rect x="54" y="979" width="10" height="3"/></g>
<text class="u" x="72" y="983" textLength="46" lengthAdjust="spacingAndGlyphs">TODO</text>
<circle cx="158" cy="975" r="7.700" class="ic"/><rect x="156.800" y="969.500" width="2.500" height="7" fill="#3c3f41"/><rect x="156.800" y="978" width="2.500" height="2.500" fill="#3c3f41"/>
<text class="u" x="175" y="983" textLength="70" lengthAdjust="spacingAndGlyphs">Problems</text>
<rect x="277" y="967" width="17" height="15" fill="#afb1b3"/><path d="M280 971L284 974.500L280 978M285 979H290" fill="none" stroke="#3c3f41" stroke-width="1.500"/>
<text class="u" x="302" y="983" textLength="65" lengthAdjust="spacingAndGlyphs">Terminal</text>
<g class="ic"><rect x="400" y="970" width="16" height="2.800"/><rect x="400" y="975" width="11" height="2.800"/><rect x="400" y="980" width="16" height="2.800"/></g>
<text class="u" x="425" y="983" textLength="51" lengthAdjust="spacingAndGlyphs">Logcat</text>
<path d="M505 982A8.500 8.500 0 0 1 520 973" fill="none" stroke="#afb1b3" stroke-width="3.500"/><path d="M522 976A8 8 0 0 1 523 982M511 982L516 975" fill="none" stroke="#afb1b3" stroke-width="2.500"/>
<text class="u" x="531" y="983" textLength="54" lengthAdjust="spacingAndGlyphs">Profiler</text>
<g class="ic"><circle cx="627" cy="971" r="4.500"/><rect x="620" y="975" width="14" height="6"/><path d="M622 980H632L634 986H620Z"/></g>
<text class="u" x="644" y="983" textLength="115" lengthAdjust="spacingAndGlyphs">App Inspection</text>
<circle cx="1591.600" cy="976" r="9.300" fill="#3c9a46"/><text x="1591.600" y="981" text-anchor="middle" style="font:bold 13px 'Liberation Sans',sans-serif;fill:#e8e8e8">1</text>
<text class="u" x="1609" y="983" textLength="73.600" lengthAdjust="spacingAndGlyphs">Event Log</text>
<g fill="none" stroke="#afb1b3" stroke-width="1.300"><path d="M1718 976V967H1729M1721 979V970H1733"/><circle cx="1729" cy="978" r="4"/><path d="M1732 981L1736 985" stroke-width="2"/></g>
<text class="u" x="1743" y="983" textLength="127" lengthAdjust="spacingAndGlyphs">Layout Inspector</text>

<!-- status bar -->
<path d="M14 1000H26V1014H14Z" fill="none" stroke="#afb1b3" stroke-width="1.300"/><path d="M11 1003V1017H23" fill="none" stroke="#afb1b3" stroke-width="1.300"/>
<text class="u" x="41" y="1013" textLength="756" lengthAdjust="spacingAndGlyphs">Project update recommended: Android Gradle Plugin can be upgraded. (3 minutes ago)</text>
<text class="u" x="1437" y="1013" textLength="135" lengthAdjust="spacingAndGlyphs">11:41 (33 chars)</text>
<text class="u" x="1591" y="1013" textLength="41" lengthAdjust="spacingAndGlyphs">CRLF</text>
<text class="u" style="fill:#6f7274" x="1652.600" y="1013" textLength="51.400" lengthAdjust="spacingAndGlyphs">UTF-8</text>
<text class="u" x="1722" y="1013" textLength="73" lengthAdjust="spacingAndGlyphs">4 spaces</text>
<path d="M1815 1006V1000.500A3.500 3.500 0 0 1 1822 1000.500" fill="none" stroke="#afb1b3" stroke-width="2"/><rect x="1819" y="1006" width="11" height="10" fill="#afb1b3"/>
<circle cx="1859" cy="1007" r="10.500" fill="#afb1b3"/><circle cx="1855" cy="1003.500" r="1.500" fill="#3c3f41"/><circle cx="1863" cy="1003.500" r="1.500" fill="#3c3f41"/><path d="M1853.500 1010Q1859 1015 1864.500 1010" fill="none" stroke="#3c3f41" stroke-width="1.500"/>
<circle cx="1895" cy="1007" r="10.500" fill="#afb1b3"/><circle cx="1891" cy="1003.500" r="1.500" fill="#3c3f41"/><circle cx="1899" cy="1003.500" r="1.500" fill="#3c3f41"/><path d="M1889.500 1013Q1895 1008 1900.500 1013" fill="none" stroke="#3c3f41" stroke-width="1.500"/>

<!-- desktop strip -->
<rect y="1020" width="1920" height="3" fill="#e9ecf3"/><rect x="618" y="1020" width="69" height="3" fill="#f6f6f2"/><rect x="687" y="1020" width="1" height="3" fill="#9a9a9a"/><rect x="688" y="1020" width="1232" height="3" fill="#eeeeea"/>
</svg>
</body></html>
